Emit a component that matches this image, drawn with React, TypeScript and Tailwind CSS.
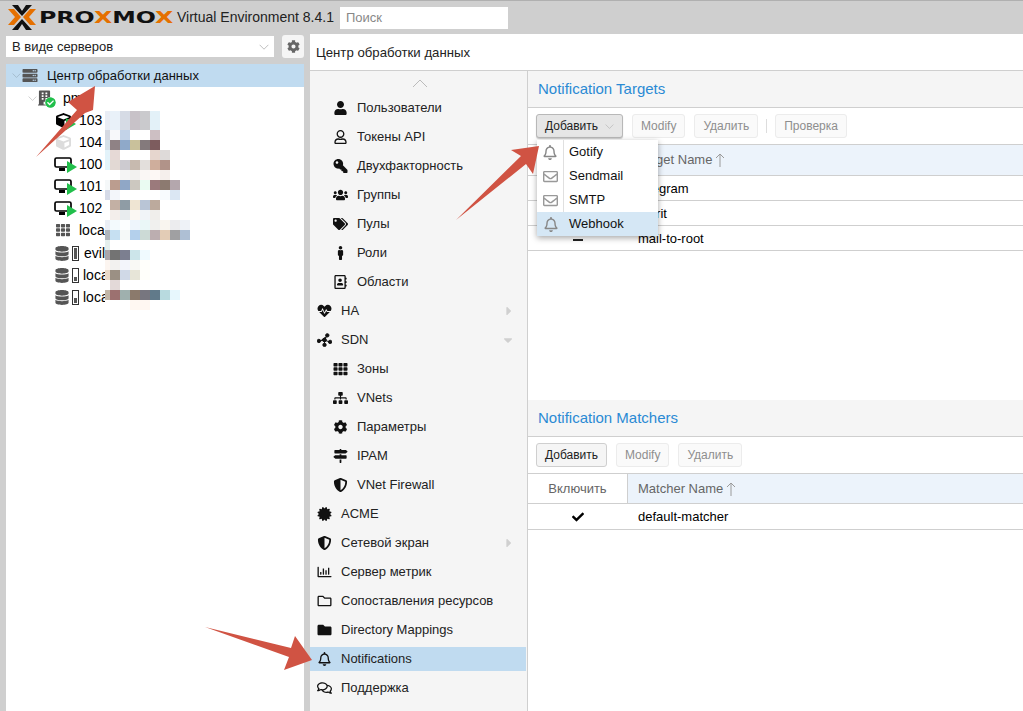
import React from "react";
import {
  FaUser, FaRegUser, FaKey, FaUsers, FaTags, FaMale, FaRegAddressBook, FaHeartbeat, FaTh, FaSitemap, FaCog,
  FaMapSigns, FaShieldAlt, FaCertificate, FaRegChartBar, FaRegFolder, FaFolder, FaRegBell, FaRegComments,
  FaRegEnvelope, FaCheck, FaServer, FaBuilding, FaCube, FaDatabase, FaCaretRight, FaCaretDown, FaCheckCircle,
} from "react-icons/fa";

const Chevron = ({ up = false, className = "" }: { up?: boolean; className?: string }) => (
  <svg viewBox="0 0 16 9" className={className} fill="none" stroke="currentColor" strokeWidth="1">
    <path d={up ? "M1 8 L8 1 L15 8" : "M1 1 L8 8 L15 1"} />
  </svg>
);

const SortUp = () => (
  <svg viewBox="0 0 10 14" className="ml-[3px] h-[14px] w-[10px] text-[#9a9a9a]" fill="none" stroke="currentColor" strokeWidth="1">
    <path d="M5 14 V1 M1 5 L5 1 L9 5" />
  </svg>
);

const SdnIcon = () => (
  <svg viewBox="0 0 16 14" className="h-[14px] w-[15px]" fill="#111" stroke="#111" strokeWidth="1">
    <path d="M3 8 L8 7 L11 2 M8 7 L13 9 M8 7 L8 12" />
    <circle cx="2" cy="8" r="1.8" />
    <circle cx="8" cy="7" r="2" />
    <circle cx="11" cy="2" r="1.8" />
    <circle cx="14" cy="9" r="1.8" />
    <circle cx="8" cy="12.2" r="1.8" />
  </svg>
);

type Item = { icon: React.ReactNode; label: string; sub?: boolean; caret?: "right" | "down"; selected?: boolean };
const ic = "h-[14px] w-[15px] text-[#111]";
const items: Item[] = [
  { icon: <FaUser className={ic} />, label: "Пользователи", sub: true },
  { icon: <FaRegUser className={ic} />, label: "Токены API", sub: true },
  { icon: <FaKey className="h-[14px] w-[15px] -scale-x-100 text-[#111]" />, label: "Двухфакторность", sub: true },
  { icon: <FaUsers className={ic} />, label: "Группы", sub: true },
  { icon: <FaTags className={ic} />, label: "Пулы", sub: true },
  { icon: <FaMale className={ic} />, label: "Роли", sub: true },
  { icon: <FaRegAddressBook className={ic} />, label: "Области", sub: true },
  { icon: <FaHeartbeat className={ic} />, label: "HA", caret: "right" },
  { icon: <SdnIcon />, label: "SDN", caret: "down" },
  { icon: <FaTh className={ic} />, label: "Зоны", sub: true },
  { icon: <FaSitemap className={ic} />, label: "VNets", sub: true },
  { icon: <FaCog className={ic} />, label: "Параметры", sub: true },
  { icon: <FaMapSigns className={ic} />, label: "IPAM", sub: true },
  { icon: <FaShieldAlt className={ic} />, label: "VNet Firewall", sub: true },
  { icon: <FaCertificate className={ic} />, label: "ACME" },
  { icon: <FaShieldAlt className={ic} />, label: "Сетевой экран", caret: "right" },
  { icon: <FaRegChartBar className={ic} />, label: "Сервер метрик" },
  { icon: <FaRegFolder className={ic} />, label: "Сопоставления ресурсов" },
  { icon: <FaFolder className={ic} />, label: "Directory Mappings" },
  { icon: <FaRegBell className={ic} />, label: "Notifications", selected: true },
  { icon: <FaRegComments className={ic} />, label: "Поддержка" },
];

const W = "#ffffff";
const mosaic: { y: number; h: number; c: string[] }[] = [
  { y: 111, h: 19, c: ["#e9edf5", "#e9f1f9", "#d6dbe5", "#c8c2c8", "#cacacd", "#e3f1f8"] },
  { y: 130, h: 10, c: ["#d5d9e2", "#f7f8fa", "#c3d3e8", W, W, "#cdbfc3"] },
  { y: 140, h: 10, c: ["#d5e1e8", "#8f8285", "#8fa9c9", "#c9c19b", "#847a7c", "#7d5c5e"] },
  { y: 150, h: 10, c: ["#e3f3fa", "#e6d9d6", W, W, W, "#e6d6ce", "#dedad9"] },
  { y: 160, h: 10, c: ["#e3f5fb", "#e2d9d4", "#cdcbd0", "#c7baaf", "#e3dfdc", "#cfae9c", "#b19389"] },
  { y: 170, h: 10, c: [W, W, "#f4f4f4", "#f2f1ef", "#faf7f5", "#fdf8f5", "#f5efec"] },
  { y: 180, h: 10, c: ["#f5f8f9", "#bb9d8f", "#90a7c6", "#ccc8c0", "#eafbf2", "#9b7a7c", "#8c7a70", "#b4a7ad"] },
  { y: 190, h: 10, c: ["#d5dbe8", "#f3f6fa", W, W, W, W, "#f8fbfe", "#dbe7f3"] },
  { y: 200, h: 10, c: [W, "#c3b0a4", "#8f9ca5", "#efe5d3", "#b9c5d6", "#bcaa9d"] },
  { y: 210, h: 10, c: [W, "#f3eeeb", "#e8ecee", "#fbf8f3", "#f1f4f8", "#f0eeeb"] },
  { y: 220, h: 10, c: ["#eaeef5", "#f3fafd", "#fcfeff", "#eef5fc", "#eaf7f7", "#f0f0ee", "#f9f5ef", "#ececee", "#eef2f7"] },
  { y: 230, h: 10, c: ["#b0b5bb", "#c6e0f2", "#f5f9f8", "#b4d0ec", "#ccdad6", "#bcaeb0", "#e3ccb6", "#a0a0a2", "#aebfd4"] },
  { y: 240, h: 10, c: ["#e5efed"] },
  { y: 250, h: 10, c: ["#aca5aa", "#737373", "#7c7f90", "#cce5ea", "#f0faff"] },
  { y: 260, h: 10, c: ["#fcf5f0", "#f2f1ef", "#f3f5fb", "#f9f9f5", "#fffffb"] },
  { y: 270, h: 10, c: ["#e9d9c8", "#9b9084", "#d0d9e7", "#e7e5d8", "#fffffa"] },
  { y: 280, h: 10, c: [W, "#e3d9d8"] },
  { y: 290, h: 10, c: ["#c2b6a8", "#9c7170", "#9fb0ae", "#8b7a6c", "#77767f", "#617a8a", "#b8dadf", "#e7f7fd"] },
  { y: 300, h: 10, c: [W, W, W, "#fff8f2", "#fff7f2"] },
];

const Mosaic = () => (
  <div className="absolute left-[105px] top-[111px] flex flex-col">
    {mosaic.map((r) => (
      <div key={r.y} className="flex" style={{ height: r.h }}>
        {r.c.map((c, i) => (
          <div key={i} className={i === 0 ? "h-full w-[5px]" : "h-full w-[10px]"} style={{ background: c }} />
        ))}
      </div>
    ))}
  </div>
);

const Play = () => (
  <svg viewBox="0 0 10 12" className="absolute bottom-[-2px] right-[-5px] h-[12px] w-[10px]">
    <path d="M0 0 L10 6 L0 12 Z" fill="#21bf4b" />
  </svg>
);

const Monitor = () => (
  <span className="relative inline-flex h-[14px] w-[18px]">
    <svg viewBox="0 0 18 14" className="h-[14px] w-[18px]" fill="none" stroke="#000" strokeWidth="1.7">
      <rect x="1" y="1" width="16" height="9" rx="1.5" />
      <path d="M5 12.5 H11" strokeWidth="3" />
    </svg>
    <Play />
  </span>
);

const Storage = ({ level }: { level: number }) => (
  <span className="flex items-center">
    <FaDatabase className="h-[15px] w-[14px] text-[#555]" />
    <span className="ml-[3px] flex h-[15px] w-[7px] flex-col justify-end border border-[#333] p-[1px]">
      <span className="block w-full bg-[#555]" style={{ height: level }} />
    </span>
  </span>
);

const TreeRow = ({ icon, label, pl = 48, gap = 7 }: { icon: React.ReactNode; label: string; pl?: number; gap?: number }) => (
  <div className="flex h-[22px] items-center text-[14px] text-[#000]" style={{ paddingLeft: pl }}>
    <span className="flex min-w-[18px] shrink-0 items-center justify-center">{icon}</span>
    <span style={{ marginLeft: gap }}>{label}</span>
  </div>
);

const Btn = ({ label, on, off, caret }: { label: string; on?: boolean; off?: boolean; caret?: boolean }) => (
  <div
    className={
      "flex h-[24px] items-center rounded-[3px] border px-[8px] text-[12px] " +
      (on
        ? "border-[#b8b8b8] bg-[#e6e6e6] text-[#222] shadow-[0_1px_1px_rgba(0,0,0,0.2)]"
        : off
        ? "border-[#ececec] bg-[#fafafa] text-[#8e8e8e]"
        : "border-[#cfcfcf] bg-[#f5f5f5] text-[#222]")
    }
  >
    {label}
    {caret && <Chevron className="ml-[7px] h-[5px] w-[9px] text-[#aaa]" />}
  </div>
);

const Title = ({ children }: { children: string }) => (
  <div className="flex h-[37px] shrink-0 items-center border-b border-[#cfcfcf] bg-[#f5f5f5] pl-[10px] text-[15px] text-[#2a8ad4]">
    {children}
  </div>
);

const Grid = ({ name, rows, headH, rowH }: { name: string; rows: { mark: React.ReactNode; label: string }[]; headH: number; rowH: number }) => (
  <div>
    <div className="flex border-b border-[#cfcfcf] text-[13px] text-[#666]" style={{ height: headH }}>
      <div className="flex w-[100px] items-center justify-center border-r border-[#cfcfcf]">Включить</div>
      <div className="flex flex-1 items-center bg-[#ecf3fb] pl-[10px]">
        {name}
        <SortUp />
      </div>
    </div>
    {rows.map((r) => (
      <div key={r.label} className="flex items-center border-b border-[#cfcfcf] pt-[1px] text-[13px] text-[#000]" style={{ height: rowH }}>
        <div className="flex w-[100px] justify-center">{r.mark}</div>
        <div className="pl-[10px]">{r.label}</div>
      </div>
    ))}
  </div>
);

const popup = [
  { icon: <FaRegBell className="h-[15px] w-[14px] text-[#888]" />, label: "Gotify" },
  { icon: <FaRegEnvelope className="h-[15px] w-[15px] text-[#999]" />, label: "Sendmail" },
  { icon: <FaRegEnvelope className="h-[15px] w-[15px] text-[#999]" />, label: "SMTP" },
  { icon: <FaRegBell className="h-[15px] w-[14px] text-[#888]" />, label: "Webhook", active: true },
];

const Arrow = ({ points }: { points: string }) => <polygon points={points} fill="#d05343" />;
const Check = () => <FaCheck className="h-[12px] w-[12px] text-black" />;

export default function App() {
  return (
    <div className="relative flex h-[711px] w-[1023px] flex-col overflow-hidden bg-[#cfcfcf] font-['Liberation_Sans',Arial,sans-serif]">
      <header className="flex h-[34px] shrink-0 items-center border-t border-[#b0b0b0] pl-[8px]">
        <svg viewBox="8 4 28 25" className="h-[25px] w-[28px] shrink-0">
          <path d="M8 8 H14 L21 16 L14 24 H8 L15 16 Z" fill="#e57000" />
          <path d="M36 8 H30 L23 16 L30 24 H36 L29 16 Z" fill="#e57000" />
          <path d="M12 4 H18 L22 10 L26 4 H32 L22 15 Z" fill="#111" />
          <path d="M12 29 H18 L22 23 L26 29 H32 L22 18 Z" fill="#111" />
        </svg>
        <div className="ml-[3px] w-[138px] shrink-0 whitespace-nowrap">
          <span className="inline-block origin-left scale-x-[1.48] font-['DejaVu_Sans',sans-serif] text-[16px] font-bold leading-none text-[#111]">
            PRO<span className="text-[#e57000]">X</span>MO<span className="text-[#e57000]">X</span>
          </span>
        </div>
        <span className="whitespace-nowrap text-[14px] text-[#222]">Virtual Environment 8.4.1</span>
        <div className="ml-[6px] flex h-[22px] w-[168px] items-center bg-white pl-[6px] text-[13px] text-[#888]">Поиск</div>
      </header>

      <div className="flex min-h-0 flex-1">
        <aside className="ml-[6px] flex w-[298px] shrink-0 flex-col">
          <div className="flex h-[30px] items-start">
            <div className="mt-[2px] flex h-[21px] w-[268px] items-center justify-between bg-white pl-[6px] pr-[4px] text-[13px] text-[#222]">
              В виде серверов
              <Chevron className="mr-[1px] h-[6px] w-[10px] text-[#999]" />
            </div>
            <div className="ml-[8px] mt-[1px] flex h-[23px] w-[22px] items-center justify-center rounded-[3px] bg-[#f5f5f5]">
              <FaCog className="h-[13px] w-[13px] text-[#666]" />
            </div>
          </div>
          <div className="flex-1 bg-white text-[#000]">
            <div className="flex h-[23px] items-center bg-[#c0dbf0] pl-[6px] text-[13px] text-[#111]">
              <Chevron className="h-[5px] w-[9px] text-[#8fa5b5]" />
              <FaServer className="ml-[1px] h-[15px] w-[16px] text-[#555]" />
              <span className="ml-[9px]">Центр обработки данных</span>
            </div>
            <div className="flex h-[22px] items-center pl-[22px] text-[14px]">
              <Chevron className="h-[5px] w-[9px] text-[#aaa]" />
              <span className="relative ml-[1px] inline-flex w-[15px]">
                <FaBuilding className="h-[16px] w-[13px] text-[#555]" />
                <FaCheckCircle className="absolute bottom-[-2px] right-[-3px] h-[11px] w-[11px] rounded-full bg-white text-[#21bf4b]" />
              </span>
              <span className="ml-[10px]">pm</span>
            </div>
            <TreeRow icon={<span className="relative inline-flex"><FaCube className="h-[15px] w-[15px] text-black" /><Play /></span>} label="103" />
            <TreeRow icon={<FaCube className="h-[15px] w-[15px] text-[#dcdcdc]" />} label="104" />
            <TreeRow icon={<Monitor />} label="100" />
            <TreeRow icon={<Monitor />} label="101" />
            <TreeRow icon={<Monitor />} label="102" />
            <TreeRow icon={<FaTh className="h-[14px] w-[16px] text-[#555]" />} label="local" />
            <div className="mt-[1px]">
              <TreeRow icon={<Storage level={11} />} label="evil" pl={49} gap={5} />
            </div>
            <TreeRow icon={<Storage level={4} />} label="loca" pl={49} gap={4} />
            <TreeRow icon={<Storage level={5} />} label="loca" pl={49} gap={4} />
          </div>
        </aside>

        <main className="ml-[6px] flex min-w-0 flex-1 flex-col bg-white">
          <div className="flex h-[37px] shrink-0 items-center border-b border-[#cfcfcf] pl-[6px] pt-[1px] text-[13.2px] text-[#222]">
            Центр обработки данных
          </div>
          <div className="flex min-h-0 flex-1">
            <nav className="relative flex w-[218px] shrink-0 flex-col gap-[5px] border-r border-[#cfcfcf] bg-[#f5f5f5] pt-[25px]">
              <Chevron up className="absolute left-[102px] top-[8px] h-[9px] w-[16px] text-[#bbb]" />
              {items.map((it) => (
                <div
                  key={it.label}
                  className={"mr-[1px] flex h-[24px] shrink-0 items-center text-[13px] text-[#222] " + (it.selected ? "bg-[#c0dbf0]" : "")}
                  style={{ paddingLeft: it.sub ? 23 : 7 }}
                >
                  <span className="flex w-[15px] shrink-0 justify-center">{it.icon}</span>
                  <span className="ml-[9px] whitespace-nowrap">{it.label}</span>
                  {it.caret === "right" && <FaCaretRight className="ml-auto mr-[12px] h-[14px] w-[10px] text-[#d0d0d0]" />}
                  {it.caret === "down" && <FaCaretDown className="ml-auto mr-[12px] h-[14px] w-[12px] text-[#d0d0d0]" />}
                </div>
              ))}
            </nav>

            <section className="flex min-w-0 flex-1 flex-col">
              <div className="relative h-[329px] shrink-0">
                <Title>Notification Targets</Title>
                <div className="flex h-[37px] items-center gap-[9px] border-b border-[#cfcfcf] pl-[8px]">
                  <Btn label="Добавить" caret on />
                  <Btn label="Modify" off />
                  <Btn label="Удалить" off />
                  <span className="-mx-[1px] h-[14px] w-px bg-[#ddd]" />
                  <Btn label="Проверка" off />
                </div>
                <Grid
                  name="Target Name"
                  headH={31}
                  rowH={25}
                  rows={[
                    { mark: <Check />, label: "telegram" },
                    { mark: <Check />, label: "gotrit" },
                    { mark: <span className="mt-[2px] h-[2px] w-[10px] bg-[#222]" />, label: "mail-to-root" },
                  ]}
                />
                <div className="absolute left-[9px] top-[69px] w-[121px] bg-white shadow-[0_2px_6px_rgba(0,0,0,0.35)]">
                  {popup.map((p) => (
                    <div key={p.label} className={"flex h-[24px] items-center text-[13px] text-[#111] " + (p.active ? "bg-[#d5e7f5]" : "")}>
                      <span className={"flex h-full w-[27px] items-center justify-center " + (p.active ? "" : "border-r border-[#e0e0e0]")}>{p.icon}</span>
                      <span className="ml-[5px]">{p.label}</span>
                    </div>
                  ))}
                </div>
              </div>
              <Title>Notification Matchers</Title>
              <div className="flex h-[37px] items-center gap-[9px] border-b border-[#cfcfcf] pl-[8px]">
                <Btn label="Добавить" />
                <Btn label="Modify" off />
                <Btn label="Удалить" off />
              </div>
              <Grid name="Matcher Name" headH={30} rowH={26} rows={[{ mark: <Check />, label: "default-matcher" }]} />
            </section>
          </div>
        </main>
      </div>

      <Mosaic />

      <svg viewBox="0 0 1023 711" className="pointer-events-none absolute left-0 top-0 h-[711px] w-[1023px]">
        <Arrow points="36,157 77,110 68,102 95,86 93,110 85,113" />
        <Arrow points="456,220 521,156 511,150 539,146 533,174 526,164" />
        <Arrow points="205,627 291,648 295,636 312,660 284,670 289,657" />
      </svg>
    </div>
  );
}
